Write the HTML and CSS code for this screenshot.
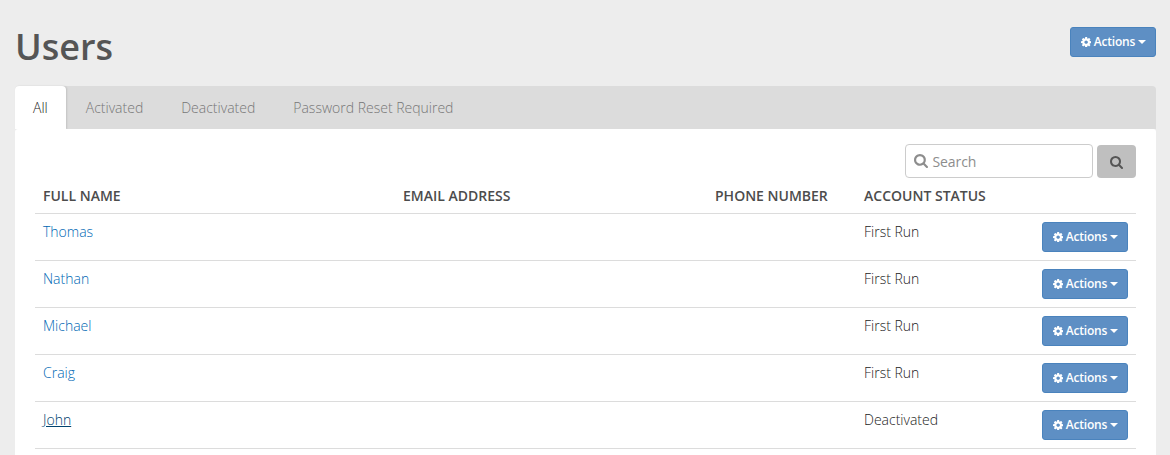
FILE: index.html
```
<!DOCTYPE html>
<html lang="en">
<head>
<meta charset="utf-8">
<title>Users</title>
<link rel="stylesheet" href="styles.css">
</head>
<body>
<svg class="defs" width="0" height="0">
  <symbol id="cog" viewBox="0 128 1536 1536"><path d="M1024 896q0-106-75-181t-181-75-181 75-75 181 75 181 181 75 181-75 75-181zm512-109v222q0 12-8 23t-20 13l-185 28q-19 54-39 91 35 50 107 138 10 12 10 25t-9 23q-27 37-99 108t-94 71q-12 0-26-9l-138-108q-44 23-91 38-16 136-29 186-7 28-36 28h-222q-14 0-24.500-8.500t-11.500-21.500l-28-184q-49-16-90-37l-141 107q-10 9-25 9-14 0-25-11-126-114-165-168-7-10-7-23 0-12 8-23 15-21 51-66.500t54-70.500q-27-50-41-99l-183-27q-13-2-21-12.500t-8-23.500v-222q0-12 8-23t19-13l186-28q14-46 39-92-40-57-107-138-10-12-10-24 0-10 9-23 26-36 98.500-107.500t94.500-71.500q13 0 26 10l138 107q44-23 91-38 16-136 29-186 7-28 36-28h222q14 0 24.500 8.500t11.500 21.500l28 184q49 16 90 37l142-107q9-9 24-9 13 0 25 10 129 119 165 170 7 8 7 22 0 12-8 23-15 21-51 66.500t-54 70.500q26 50 41 98l183 28q13 2 21 12.500t8 23.500z"/></symbol>
  <symbol id="search" viewBox="0 128 1664 1664"><path d="M1152 832q0-185-131.500-316.500t-316.500-131.500-316.500 131.500-131.500 316.500 131.500 316.500 316.500 131.500 316.500-131.500 131.500-316.500zm512 832q0 52-38 90t-90 38q-54 0-90-38l-343-342q-179 124-399 124-143 0-273.500-55.500t-225-150-150-225-55.500-273.500 55.500-273.500 150-225 225-150 273.500-55.500 273.500 55.500 225 150 150 225 55.500 273.500q0 220-124 399l343 343q37 37 37 90z"/></symbol>
</svg>
<header class="page-header">
  <h1>Users</h1>
  <button class="btn"><svg class="cog"><use href="#cog"/></svg><span>Actions</span><i class="caret"></i></button>
</header>
<nav class="tabs">
  <a class="tab active">All</a>
  <a class="tab">Activated</a>
  <a class="tab">Deactivated</a>
  <a class="tab">Password Reset Required</a>
</nav>
<main class="panel">
  <form class="search">
    <label class="field"><svg class="field-icon"><use href="#search"/></svg><span>Search</span></label>
    <button type="button" class="go"><svg class="go-icon"><use href="#search"/></svg></button>
  </form>
  <div class="row head"><span>FULL NAME</span><span>EMAIL ADDRESS</span><span>PHONE NUMBER</span><span>ACCOUNT STATUS</span><span></span></div>
  <div class="row"><a>Thomas</a><span></span><span></span><span>First Run</span><button class="btn"><svg class="cog"><use href="#cog"/></svg><span>Actions</span><i class="caret"></i></button></div>
  <div class="row"><a>Nathan</a><span></span><span></span><span>First Run</span><button class="btn"><svg class="cog"><use href="#cog"/></svg><span>Actions</span><i class="caret"></i></button></div>
  <div class="row"><a>Michael</a><span></span><span></span><span>First Run</span><button class="btn"><svg class="cog"><use href="#cog"/></svg><span>Actions</span><i class="caret"></i></button></div>
  <div class="row"><a>Craig</a><span></span><span></span><span>First Run</span><button class="btn"><svg class="cog"><use href="#cog"/></svg><span>Actions</span><i class="caret"></i></button></div>
  <div class="row"><a class="hovered">John</a><span></span><span></span><span>Deactivated</span><button class="btn"><svg class="cog"><use href="#cog"/></svg><span>Actions</span><i class="caret"></i></button></div>
</main>
</body>
</html>
```
FILE: styles.css
```
* { box-sizing: border-box; }
html { height: 100%; overflow: hidden; }
body {
  margin: 0;
  height: 100%;
  padding: 0 14px 0 15px;
  background: #ededed;
  color: #222;
  font: 300 14px/20px "Open Sans", sans-serif;
  display: flex;
  flex-direction: column;
}
.defs { display: none; }
svg { fill: currentColor; flex: none; }
.page-header {
  height: 86px;
  flex: none;
  display: flex;
  justify-content: space-between;
  align-items: flex-start;
  padding-top: 27px;
}
h1 {
  margin: 0;
  font-size: 36px;
  line-height: 40px;
  font-weight: 600;
  color: #555;
}
.btn {
  width: 86px;
  height: 30px;
  padding: 0 0 0 9.500px;
  border: 1px solid #4a83bd;
  border-radius: 3px;
  background: #5e8fc4;
  color: #fff;
  font: 600 12px/18px "Open Sans", sans-serif;
  display: flex;
  align-items: center;
}
.btn span { margin: 0 3px; letter-spacing: -0.2px; }
.cog { width: 10.300px; height: 10.300px; }
.caret {
  border: 4px solid transparent;
  border-top-color: #fff;
  border-bottom: 0;
}
.tabs {
  height: 43px;
  flex: none;
  display: flex;
  gap: 2px;
  background: #dcdcdc;
  border-radius: 4px 4px 0 0;
}
.tab {
  padding: 12px 18px 0;
  color: #777;
}
.tab.active {
  background: #fff;
  color: #222;
  border-radius: 4px 4px 0 0;
  box-shadow: 1px 0 2px rgba(0, 0, 0, .12);
}
.panel {
  flex: 1;
  background: #fff;
  padding: 15px 20px 0;
  border-radius: 3px 3px 0 0;
}
.search {
  display: flex;
  justify-content: flex-end;
  align-items: flex-end;
  gap: 4px;
  height: 34px;
}
.field {
  width: 188px;
  height: 34px;
  padding-left: 8px;
  display: flex;
  align-items: center;
  gap: 4.500px;
  border: 1px solid #ccc;
  border-radius: 4px;
  color: #8d8d8d;
  font-weight: 400;
}
.field span { padding-top: 1px; letter-spacing: -0.1px; }
.field-icon { width: 14px; height: 14px; }
.go {
  width: 39px;
  height: 33px;
  padding: 1px 0 0;
  border: 0;
  border-radius: 4px;
  background: #bfbfbf;
  color: #555;
  display: flex;
  align-items: center;
  justify-content: center;
}
.go-icon { width: 13px; height: 13px; }
.row {
  display: grid;
  grid-template-columns: 360px 312px 149px 178px 86px;
  height: 47px;
  padding: 8px 8px 0;
  border-bottom: 1px solid #dcdcdc;
}
.row.head {
  height: 36px;
  color: #4c4c4c;
  font-weight: 600;
}
.row a { color: #0068b4; }
.row a.hovered { color: #00426e; text-decoration: underline; }
```
